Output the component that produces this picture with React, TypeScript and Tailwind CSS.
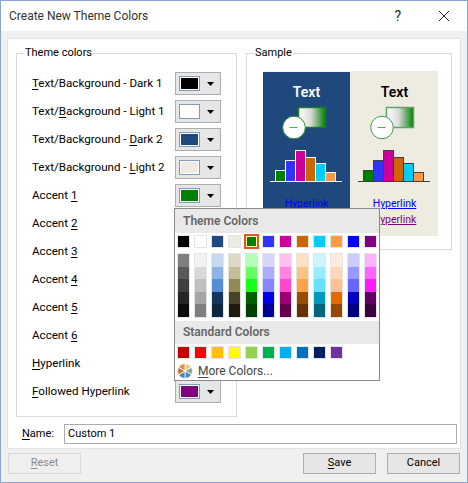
import React from 'react';

// underline the access key letter
const Key = ({ children }: { children: string }) => <span className="underline underline-offset-2">{children}</span>;

const swatchRows = [
  { label: <><Key>T</Key>ext/Background - Dark 1</>, color: '#000000' },
  { label: <>Text/<Key>B</Key>ackground - Light 1</>, color: '#ffffff' },
  { label: <>Text/Background - <Key>D</Key>ark 2</>, color: '#1f497d' },
  { label: <>Text/Background - <Key>L</Key>ight 2</>, color: '#eeece1' },
  { label: <>Accent <Key>1</Key></>, color: '#008000' },
  { label: <>Accent <Key>2</Key></>, color: '#3333ff' },
  { label: <>Accent <Key>3</Key></>, color: '#cc0099' },
  { label: <>Accent <Key>4</Key></>, color: '#cc6600' },
  { label: <>Accent <Key>5</Key></>, color: '#00ccff' },
  { label: <>Accent <Key>6</Key></>, color: '#ff9944' },
  { label: <><Key>H</Key>yperlink</>, color: '#0000ff' },
  { label: <><Key>F</Key>ollowed Hyperlink</>, color: '#800080' },
];

const themeColors = ['#000000', '#ffffff', '#1f497d', '#eeece1', '#008000', '#3333ff', '#cc0099', '#cc6600', '#00ccff', '#ff9944', '#0000ff', '#800080'];

const themeShades = [
  ['#7f7f7f', '#595959', '#3f3f3f', '#262626', '#0c0c0c'],
  ['#f2f2f2', '#d8d8d8', '#bfbfbf', '#a5a5a5', '#7f7f7f'],
  ['#c6d9f0', '#8db3e2', '#548dd4', '#17365d', '#0f243e'],
  ['#ddd9c3', '#c4bd97', '#938953', '#494429', '#1d1b10'],
  ['#b3ffb3', '#66ff66', '#1aff1a', '#006000', '#004000'],
  ['#d6d6ff', '#adadff', '#8585ff', '#0000e6', '#000099'],
  ['#ffc1ef', '#ff85df', '#ff47cf', '#990073', '#66004d'],
  ['#ffe0c1', '#ffc285', '#ffa347', '#994d00', '#663300'],
  ['#ccf5ff', '#99ebff', '#66e0ff', '#0099bf', '#006680'],
  ['#ffeadb', '#ffd6b8', '#ffc194', '#e66a00', '#994700'],
  ['#ccccff', '#9999ff', '#6666ff', '#0000bf', '#000080'],
  ['#ffb3ff', '#ff66ff', '#ff1aff', '#600060', '#400040'],
];

const standardColors = ['#c00000', '#ff0000', '#ffc000', '#ffff00', '#92d050', '#00b050', '#00b0f0', '#0070c0', '#002060', '#7030a0'];

const ColorButton = ({ color }: { color: string }) => (
  <div className="w-[46px] h-[23px] border border-[#adadad] bg-[#e6e6e6] flex items-center pl-[3px] shrink-0">
    <div className="w-[21px] h-[15px] border border-[#7f9db9] p-px bg-white">
      <div className="w-full h-full" style={{ background: color }} />
    </div>
    <svg width="7" height="4" viewBox="0 0 7 4" className="ml-[7px]">
      <path d="M0 0h7L3.5 4z" fill="#000" />
    </svg>
  </div>
);

const SampleGraphic = ({ dark }: { dark: boolean }) => {
  const stroke = dark ? '#ffffff' : '#404040';
  const bars = [
    { x: 12, top: 65, c: '#008000' },
    { x: 22, top: 55, c: '#3333ff' },
    { x: 32, top: 45, c: '#cc0099' },
    { x: 42, top: 52, c: '#cc6600' },
    { x: 52, top: 58, c: '#00ccff' },
    { x: 62, top: 67, c: '#ff9944' },
  ];
  const id = dark ? 'fadeDark' : 'fadeLight';
  return (
    <svg width="87" height="80" viewBox="0 0 87 80" className="block">
      <defs>
        <linearGradient id={id}>
          <stop offset="0" stopColor="#ffffff" />
          <stop offset="0.45" stopColor="#dcdcdc" />
          <stop offset="1" stopColor="#008000" />
        </linearGradient>
      </defs>
      <rect x="35.5" y="2.5" width="27" height="20" fill={`url(#${id})`} stroke={dark ? '#1a7a2a' : '#5fa56a'} strokeWidth="1.5" />
      <circle cx="31" cy="22.5" r="11.3" fill="#ffffff" stroke={dark ? '#2e8b3a' : '#3f9a4a'} strokeWidth="1" />
      <path d="M26.5 23l1-1 1 1 1-1 1 1 1-1 1 1 1-1 1 1" fill="none" stroke="#008000" strokeWidth="0.8" />
      {bars.map((b) => (
        <rect key={b.x} x={b.x + 0.5} y={b.top + 0.5} width="10" height={76 - b.top} fill={b.c} stroke={stroke} />
      ))}
      <path d="M7 76.5h72" stroke={stroke} />
    </svg>
  );
};

const SamplePane = ({ dark }: { dark: boolean }) => (
  <div className={`flex-1 flex flex-col items-center ${dark ? 'bg-[#1f497d] border-t border-l border-[#f6f6f6]' : 'bg-[#eeece1] pt-px pl-px'}`}>
    <div className={`mt-[10px] h-[20px] leading-[20px] text-[14px] font-semibold ${dark ? 'text-white' : 'text-black'}`}>Text</div>
    <div className="mt-[3px] w-[87px]">
      <SampleGraphic dark={dark} />
    </div>
    <div className="mt-[11px] text-[10.5px] leading-[16px] text-[#0000ff] underline">Hyperlink</div>
    <div className="text-[10.5px] leading-[16px] text-[#800080] underline">Hyperlink</div>
  </div>
);

const Cell = ({ color, selected }: { color: string; selected?: boolean }) =>
  selected ? (
    <div className="w-[15px] h-[15px] -m-px border-2 border-[#e2571a] p-px bg-[#fff3c4] shrink-0">
      <div className="w-full h-full" style={{ background: color }} />
    </div>
  ) : (
    <div className="w-[13px] h-[13px] border border-[#e2e4e8] shrink-0">
      <div className="w-full h-full" style={{ background: color }} />
    </div>
  );

const ColorPopup = () => (
  <div className="absolute left-[173px] top-[207px] w-[206px] h-[173px] bg-white border border-[#8a8a8a] flex flex-col">
    <div className="h-[24px] bg-[#e9e9e9] pl-[8px] text-[12px] leading-[24px] font-semibold text-[#666666]">Theme Colors</div>
    <div className="flex gap-[4px] pl-[2px] pt-[2px]">
      {themeColors.map((c, i) => (
        <Cell key={c + i} color={c} selected={i === 4} />
      ))}
    </div>
    <div className="flex gap-[4px] pl-[2px] pt-[5px]">
      {themeShades.map((col, i) => (
        <div key={i} className="w-[13px] h-[65px] border border-[#e2e4e8] flex flex-col shrink-0">
          {col.map((c, j) => (
            <div key={j} className="flex-1" style={{ background: c }} />
          ))}
        </div>
      ))}
    </div>
    <div className="mt-[3px] h-[23px] bg-[#e9e9e9] pl-[8px] text-[12px] leading-[23px] font-semibold text-[#666666]">Standard Colors</div>
    <div className="flex gap-[4px] pl-[2px] pt-[2px]">
      {standardColors.map((c) => (
        <Cell key={c} color={c} />
      ))}
    </div>
    <div className="flex items-center pl-[2px] mt-[3px] h-[17px]">
      <svg width="16" height="16" viewBox="0 0 16 16" className="mr-[5px]" stroke="#ffffff" strokeWidth="0.8">
        <path d="M8 8L8 0.5A7.5 7.5 0 0 1 14.5 4.2z" fill="#e8c88a" />
        <path d="M8 8L14.5 4.2A7.5 7.5 0 0 1 14.5 11.8z" fill="#8aa88a" />
        <path d="M8 8L14.5 11.8A7.5 7.5 0 0 1 8 15.5z" fill="#4d84b8" />
        <path d="M8 8L8 15.5A7.5 7.5 0 0 1 1.5 11.8z" fill="#4d84b8" />
        <path d="M8 8L1.5 11.8A7.5 7.5 0 0 1 1.5 4.2z" fill="#c9703a" />
        <path d="M8 8L1.5 4.2A7.5 7.5 0 0 1 8 0.5z" fill="#e0913f" />
      </svg>
      <span className="text-[12px] text-[#444444]"><Key>M</Key>ore Colors...</span>
    </div>
  </div>
);

const DialogButton = ({ children, disabled, className = '' }: { children: React.ReactNode; disabled?: boolean; className?: string }) => (
  <div className={`w-[73px] h-[21px] border flex items-center justify-center text-[11px] ${disabled ? 'border-[#d9d9d9] text-[#8c8c8c] bg-[#efefef]' : 'border-[#adadad] bg-[#e6e6e6] text-black'} ${className}`}>
    {children}
  </div>
);

export default function App() {
  return (
    <div className="font-['Roboto',sans-serif] relative w-[468px] h-[483px] bg-[#f0f0f0] border border-[#8ba6d1] text-[11px] text-black overflow-hidden flex flex-col">
      {/* title bar */}
      <div className="h-[30px] bg-white flex items-center shrink-0">
        <span className="pl-[8px] text-[12px] text-[#333333] whitespace-nowrap">Create New Theme Colors</span>
        <span className="ml-auto text-[14px] text-[#222222] mr-[38px]">?</span>
        <svg width="10" height="10" viewBox="0 0 10 10" className="mr-[18px]">
          <path d="M0 0l10 10M10 0L0 10" stroke="#222" strokeWidth="1" fill="none" />
        </svg>
      </div>

      {/* client area */}
      <div className="ml-[6px] mr-[6px] mt-[7px] h-[411px] bg-white border border-[#e3e3e3] shrink-0 pt-[14px] pl-[8px] flex flex-col">
        <div className="flex items-start gap-[9px]">
          <div className="relative w-[221px] h-[364px] border border-[#d9d9d9] shrink-0">
            <div className="ml-[7px] px-[1px] leading-[14px] absolute -top-[8px] bg-white whitespace-nowrap">Theme colors</div>
            <div className="pt-[18px] pl-[15px] flex flex-col gap-[5px]">
              {swatchRows.map((r) => (
                <div key={r.color} className="flex items-center h-[23px]">
                  <div className="w-[143px] text-[11.6px] whitespace-nowrap">{r.label}</div>
                  <ColorButton color={r.color} />
                </div>
              ))}
            </div>
          </div>

          <div className="relative w-[206px] h-[197px] border border-[#d9d9d9] shrink-0">
            <div className="ml-[7px] px-[1px] leading-[14px] absolute -top-[8px] bg-white">Sample</div>
            <div className="ml-[15px] mt-[17px] w-[175px] h-[165px] flex">
              <SamplePane dark />
              <SamplePane dark={false} />
            </div>
          </div>
        </div>

        <div className="flex items-center mt-[7px] pl-[6px]">
          <span className="w-[42px]"><Key>N</Key>ame:</span>
          <div className="w-[393px] h-[20px] border border-[#adadad] pl-[3px] leading-[18px]">Custom 1</div>
        </div>
      </div>

      <ColorPopup />

      <div className="flex items-center mt-[4px] px-[7px]">
        <DialogButton disabled><Key>R</Key>eset</DialogButton>
        <DialogButton className="ml-auto"><Key>S</Key>ave</DialogButton>
        <DialogButton className="ml-[11px]">Cancel</DialogButton>
      </div>
    </div>
  );
}
